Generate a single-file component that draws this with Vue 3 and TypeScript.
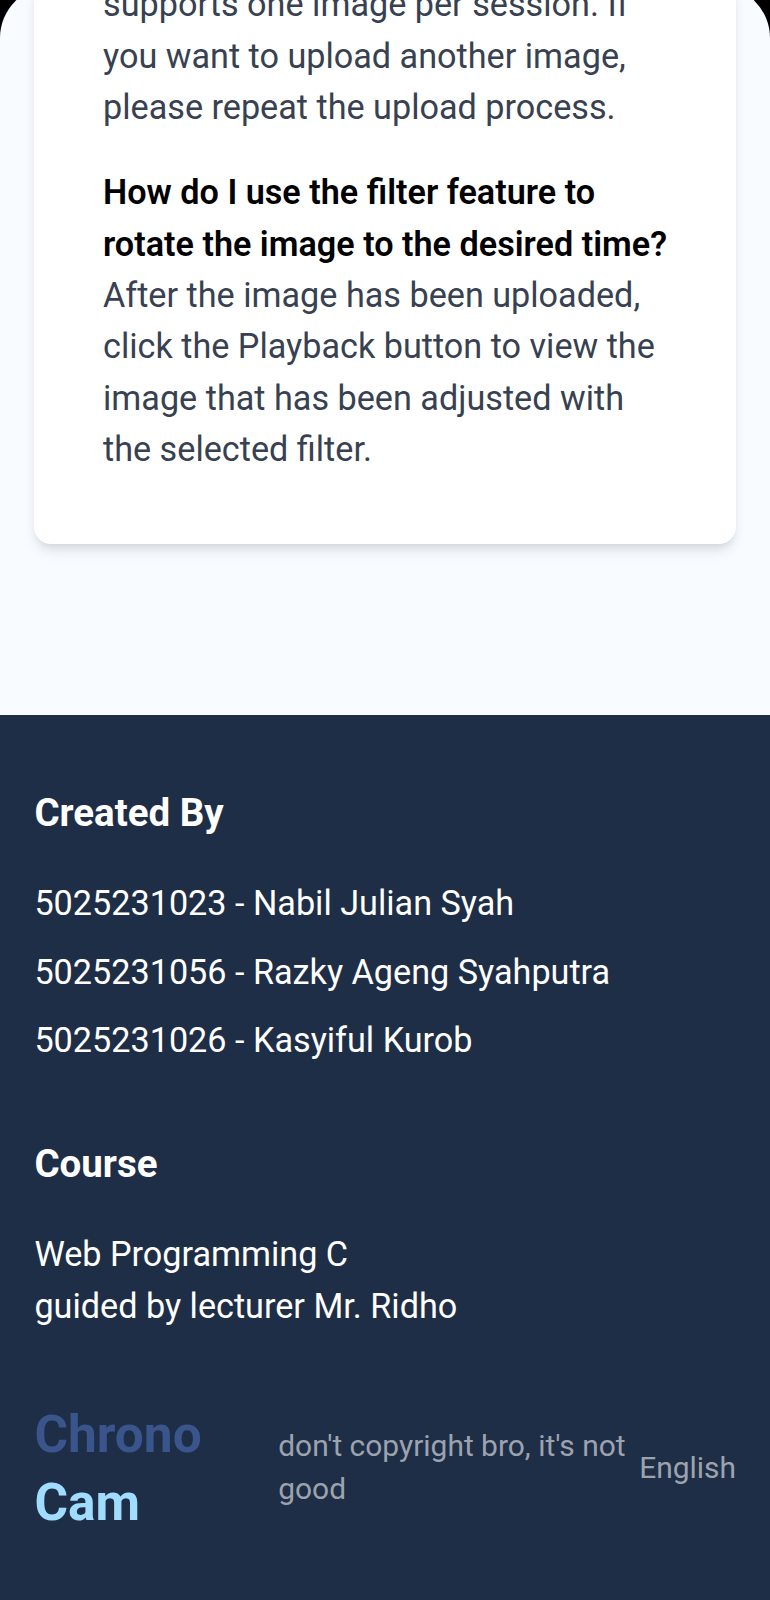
<script setup lang="ts">
interface Creator { id: string; name: string }
const creators: Creator[] = [
  { id: '5025231023', name: 'Nabil Julian Syah' },
  { id: '5025231056', name: 'Razky Ageng Syahputra' },
  { id: '5025231026', name: 'Kasyiful Kurob' },
]
</script>

<template>
  <div class="screen">
    <main class="content">
      <section class="card">
        <p class="answer first">supports one image per session. If<br>you want to upload another image,<br>please repeat the upload process.</p>
        <h3 class="question">How do I use the filter feature to<br>rotate the image to the desired time?</h3>
        <p class="answer">After the image has been uploaded,<br>click the Playback button to view the<br>image that has been adjusted with<br>the selected filter.</p>
      </section>
    </main>
    <footer class="footer">
      <h4 class="heading">Created By</h4>
      <ul class="creators">
        <li v-for="c in creators" :key="c.id">{{ c.id }} - {{ c.name }}</li>
      </ul>
      <h4 class="heading">Course</h4>
      <p class="course">Web Programming C<br>guided by lecturer Mr. Ridho</p>
      <div class="bottom">
        <div class="brand"><span class="chrono">Chrono</span><span class="cam">Cam</span></div>
        <p class="copy">don't copyright bro, it's not<br>good</p>
        <span class="lang">English</span>
      </div>
    </footer>
  </div>
</template>

<style>
body { background: #000; }
#app { display: flow-root; }
</style>
<style scoped>
.screen {
  height: 1614px;
  margin-top: -14px;
  box-sizing: border-box;
  overflow: hidden;
  border-radius: 52px 52px 0 0;
  background: #f8fbff;
  font-family: Roboto, sans-serif;
  font-size: 34.2px;
  line-height: 51.35px;
  display: flex;
  flex-direction: column;
}
h3, h4, p, ul { margin: 0; padding: 0; }
.content { height: 729px; flex: none; padding: 0 34px; box-sizing: border-box; }
.card {
  display: flow-root;
  height: 558px;
  box-sizing: border-box;
  padding: 0 69px;
  background: #fff;
  border-radius: 0 0 17px 17px;
  box-shadow: 0 9px 13px -2px rgba(0, 0, 0, .1), 0 4px 9px -4px rgba(0, 0, 0, .1);
  white-space: nowrap;
}
.answer { color: #374151; }
.first { margin-top: -6.7px; margin-bottom: 34px; }
.question { color: #000; font-size: inherit; font-weight: 600; }
.footer { flex: 1; background: #1f2e47; color: #fff; padding: 68px 34px 0 34.4px; white-space: nowrap; }
.heading { font-size: 38.5px; line-height: 60px; font-weight: 700; margin-bottom: 35px; }
.creators { list-style: none; margin-bottom: 68px; }
.creators li { margin-bottom: 17.2px; }
.course { margin-bottom: 68.6px; }
.bottom { display: flex; align-items: center; }
.brand { width: 243.8px; display: flex; flex-direction: column; font-size: 51.4px; line-height: 68.5px; font-weight: 700; }
.chrono { color: #39558c; }
.cam { color: #9fdcff; }
.copy, .lang { font-size: 29.95px; line-height: 43px; color: #9ca3af; margin-bottom: 4px; }
.lang { margin-left: auto; }
</style>
